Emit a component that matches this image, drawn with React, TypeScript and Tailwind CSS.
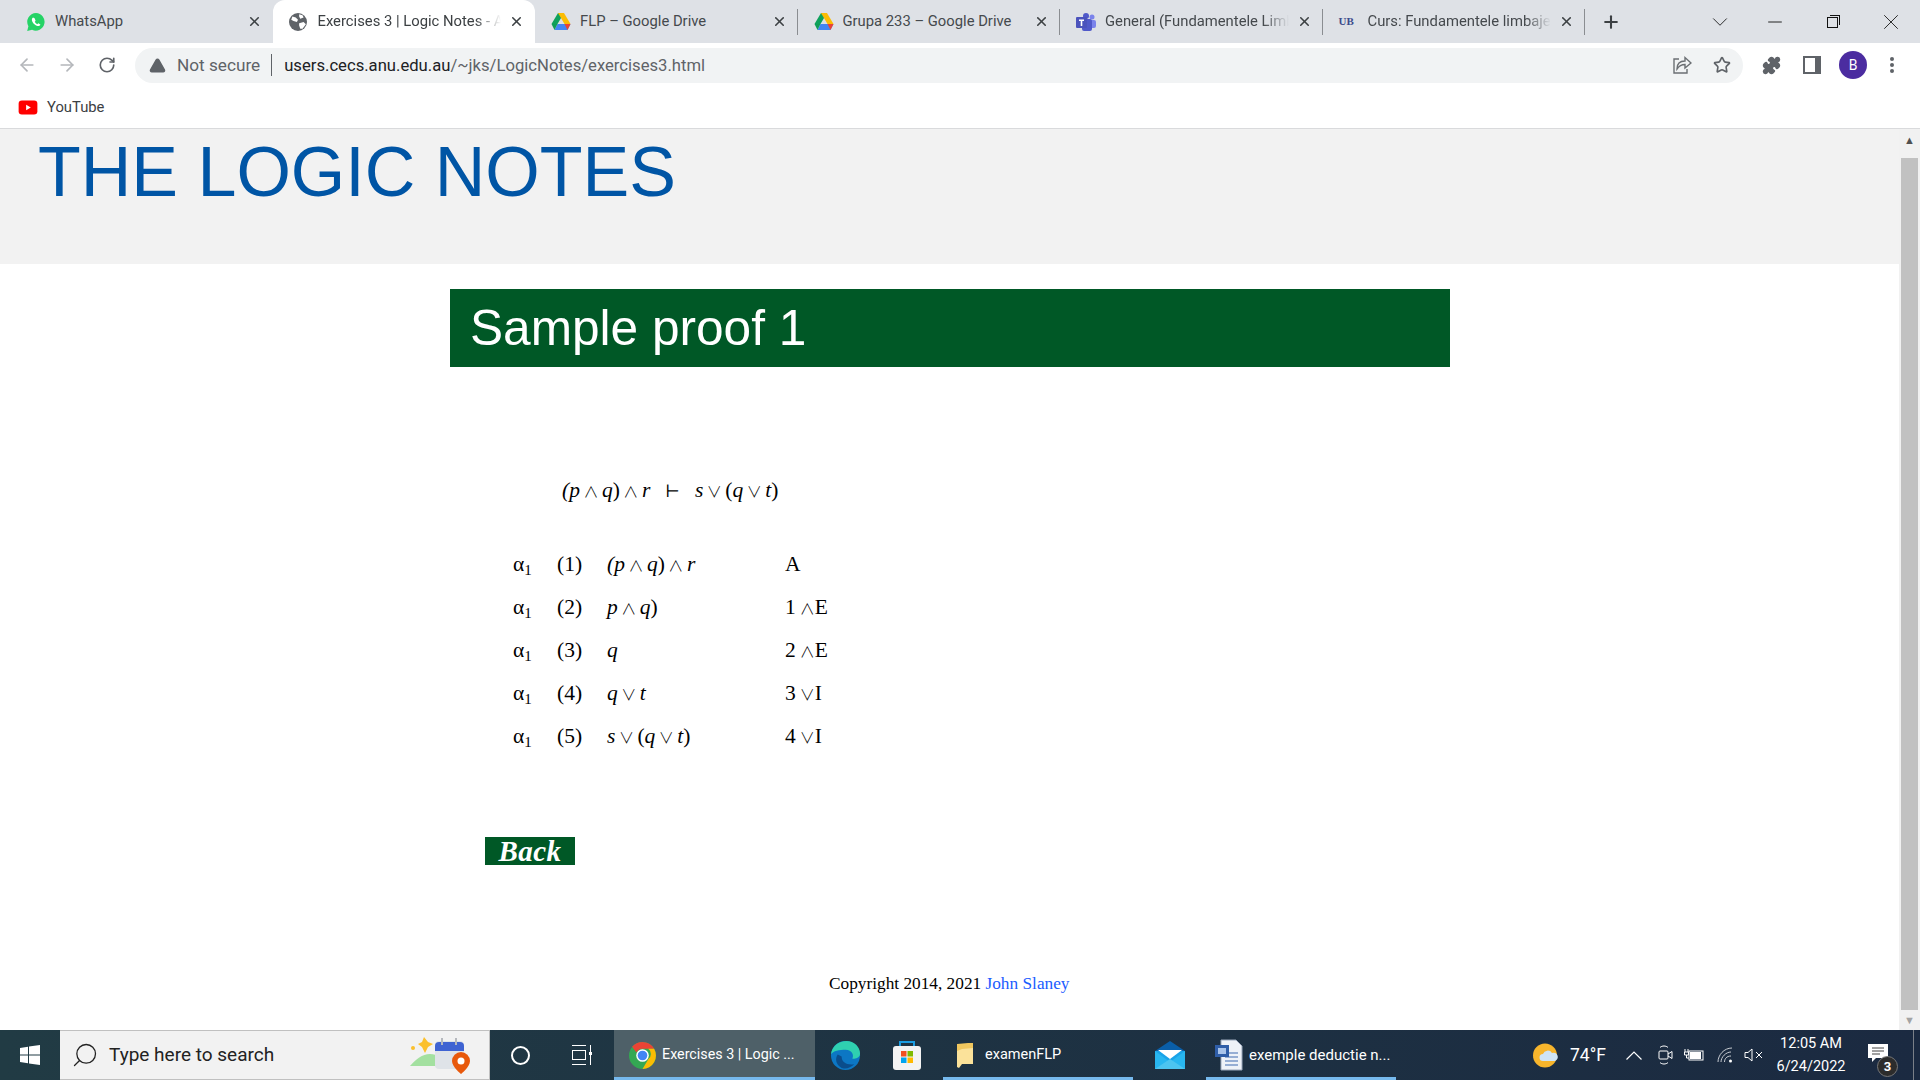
import { ArrowLeft, ArrowRight, RotateCw, Star, Puzzle, X, Plus, ChevronDown, Minus, Search, TriangleAlert } from "lucide-react";
import type { ReactNode } from "react";

function GlobeIcon() {
  return (
    <svg viewBox="0 0 16 16" className="h-[18px] w-[18px]">
      <circle cx="8" cy="8" r="8" fill="#5f6368" />
      <path d="M3 3l3 1 2 2-1 2-3-1-2-1zM9 9l4-1 2 2-3 4-2 0-1-3zM9 1l3 1 1 2-3 1-1-2z" fill="#fff" />
    </svg>
  );
}

function WhatsAppIcon() {
  return (
    <svg viewBox="0 0 20 20" className="h-[20px] w-[20px]">
      <path d="M10 1a8.800 8.800 0 0 0-7.600 13.200L1.200 19l4.900-1.200A8.800 8.800 0 1 0 10 1z" fill="#25d366" />
      <path d="M7 5.600c-1.200.8-1.500 2.400-.6 4.200 1 2 2.700 3.500 4.800 4.200 1.500.4 2.800-.3 3.200-1.500l-2.100-1.200-1 .9c-1-.4-2-1.400-2.500-2.500l.8-1-1-2.400z" fill="#fff" />
    </svg>
  );
}

function DriveIcon() {
  return (
    <svg viewBox="0 0 20 18" className="h-[18px] w-[20px]">
      <path d="M7 0h6l-6.500 11H0.500z" fill="#0ea15c" />
      <path d="M7 0h6l6.500 11h-6z" fill="#fbbc04" />
      <path d="M6.500 11H19.500l-3 6H3.500z" fill="#4285f4" />
      <path d="M0.500 11h6l-3 6z" fill="#0f9d58" />
      <path d="M13.500 11h6l-3 6z" fill="#ea4335" />
    </svg>
  );
}

function TeamsIcon() {
  return (
    <svg viewBox="0 0 20 18" className="h-[18px] w-[20px]">
      <circle cx="16" cy="4" r="2.500" fill="#7b83eb" />
      <rect x="12" y="7" width="8" height="8" rx="2" fill="#7b83eb" />
      <circle cx="10" cy="3" r="3" fill="#5059c9" />
      <rect x="6" y="6" width="10" height="12" rx="2" fill="#5059c9" />
      <rect x="0" y="4" width="11" height="11" rx="1" fill="#4b53bc" />
      <path d="M3 6.500h5v1.400H6.300V13H4.700V7.900H3z" fill="#fff" />
    </svg>
  );
}

function UbIcon() {
  return <span className="font-['Liberation_Serif',serif] text-[11px] font-bold text-[#3c4a8c]">UB</span>;
}

const tabs: { title: string; icon: ReactNode; active?: boolean; fade?: boolean }[] = [
  { title: "WhatsApp", icon: <WhatsAppIcon /> },
  { title: "Exercises 3 | Logic Notes - ANU", icon: <GlobeIcon />, active: true, fade: true },
  { title: "FLP – Google Drive", icon: <DriveIcon /> },
  { title: "Grupa 233 – Google Drive", icon: <DriveIcon /> },
  { title: "General (Fundamentele Limbajelor)", icon: <TeamsIcon />, fade: true },
  { title: "Curs: Fundamentele limbajelor", icon: <UbIcon />, fade: true },
];

function TabStrip() {
  return (
    <div className="flex h-[43px] items-stretch bg-[#dee1e6] pl-[10px] font-['Roboto',sans-serif] text-[14.800px] text-[#45494d]">
      {tabs.map((tab, i) => (
        <div
          key={tab.title}
          className={
            tab.active
              ? "flex w-[262.500px] shrink-0 items-center rounded-t-xl bg-white pl-[16px] pr-[11px] text-[#3c4043]"
              : "relative flex w-[262.500px] shrink-0 items-center pl-[16px] pr-[11px]"
          }
        >
          <span className="flex w-[29px] shrink-0 items-center">{tab.icon}</span>
          <span
            className={
              tab.fade
                ? "min-w-0 flex-1 overflow-hidden whitespace-nowrap [mask-image:linear-gradient(to_right,black_86%,transparent)]"
                : "min-w-0 flex-1 overflow-hidden whitespace-nowrap"
            }
          >
            {tab.title}
          </span>
          <X className="ml-2 h-[15px] w-[15px] shrink-0 text-[#3c4043]" strokeWidth={2.500} />
          {i > 1 && <span className="absolute right-0 top-[9px] h-[26px] w-px bg-[#8a8d91]" />}
        </div>
      ))}
      <div className="flex w-[52px] items-center justify-center">
        <Plus className="h-[20px] w-[20px] text-[#3c4043]" strokeWidth={2.500} />
      </div>
      <div className="ml-auto flex items-center text-[#111]">
        <ChevronDown className="mr-[31px] h-[26px] w-[26px]" strokeWidth={0.800} />
        <Minus className="mr-[41px] h-[22px] w-[22px]" strokeWidth={1} />
        <span className="relative mr-[40px] mt-[2px] h-[11px] w-[11px] border border-[#111]">
          <span className="absolute -right-[3px] -top-[3px] h-[10px] w-[10px] border-r border-t border-[#111]" />
        </span>
        <X className="mr-[16px] h-[26px] w-[26px]" strokeWidth={0.800} />
      </div>
    </div>
  );
}

function Toolbar() {
  return (
    <div className="flex h-[44px] items-center bg-white font-['Roboto',sans-serif]">
      <ArrowLeft className="ml-[17px] h-[20px] w-[20px] text-[#b4b7bb]" strokeWidth={2} />
      <ArrowRight className="ml-[20px] h-[20px] w-[20px] text-[#b4b7bb]" strokeWidth={2} />
      <RotateCw className="ml-[21px] h-[18px] w-[18px] text-[#5f6368]" strokeWidth={2.200} />
      <div className="ml-[19px] flex h-[35px] w-[1608px] items-center rounded-full bg-[#f1f3f4] pl-[14px] pr-[12px]">
        <TriangleAlert className="h-[17px] w-[17px] fill-[#5f6368] text-[#5f6368]" />
        <span className="ml-[11px] pt-[2px] text-[17.200px] text-[#5f6368]">Not secure</span>
        <span className="ml-[11px] mr-[12px] h-[22px] w-px bg-[#5f6368]" />
        <span className="pt-[2px] text-[16.650px] text-[#202124]">users.cecs.anu.edu.au</span>
        <span className="pt-[2px] text-[16.650px] text-[#5f6368]">/~jks/LogicNotes/exercises3.html</span>
        <svg viewBox="0 0 20 20" className="ml-auto h-[20px] w-[20px]" fill="none" stroke="#6b6f73" strokeWidth="1.400">
          <path d="M7 4H2v14h13v-4" />
          <path d="M5 14c0-5 3-8 8-8V2.500l6 5.500-6 5V9.500c-4 0-6 1.500-8 4.500z" />
        </svg>
        <Star className="ml-[21px] h-[18px] w-[18px] text-[#5f6368]" strokeWidth={2.200} />
      </div>
      <Puzzle className="ml-[19px] h-[19px] w-[19px] fill-[#5f6368] text-[#5f6368]" />
      <span className="ml-[22px] flex h-[18px] w-[18px] justify-end border-2 border-[#5f6368]">
        <span className="h-full w-[4px] bg-[#5f6368]" />
      </span>
      <span className="ml-[18px] flex h-[28px] w-[28px] items-center justify-center rounded-full bg-[#4b2ca0] text-[14px] text-white">B</span>
      <span className="ml-[23px] flex flex-col gap-[2px]">
        <span className="h-[4px] w-[4px] rounded-full bg-[#5f6368]" />
        <span className="h-[4px] w-[4px] rounded-full bg-[#5f6368]" />
        <span className="h-[4px] w-[4px] rounded-full bg-[#5f6368]" />
      </span>
    </div>
  );
}

function BookmarksBar() {
  return (
    <div className="flex h-[42px] items-center border-b border-[#d9dadc] bg-white pb-[1px] pl-[18px] font-['Roboto',sans-serif] text-[14.800px] text-[#3c4043]">
      <svg viewBox="0 0 20 16" className="h-[15px] w-[20px]">
        <rect width="20" height="15" y="0.500" rx="3.500" fill="#f00" />
        <path d="M8 5l5 3-5 3z" fill="#fff" />
      </svg>
      <span className="ml-[9px]">YouTube</span>
    </div>
  );
}

const M = ({ children }: { children: ReactNode }) => <i>{children}</i>;
const Op = ({ children }: { children: ReactNode }) => (
  <span className="mx-[3.500px] font-['Noto_Sans_CJK_SC',sans-serif] text-[15px] font-light">{children}</span>
);
const RuleOp = ({ children }: { children: ReactNode }) => (
  <span className="ml-[4px] font-['Noto_Sans_CJK_SC',sans-serif] text-[15px] font-light">{children}</span>
);

const rows: { n: string; formula: ReactNode; rule: ReactNode }[] = [
  { n: "(1)", formula: <><M>(p</M><Op>∧</Op><M>q</M>)<Op>∧</Op><M>r</M></>, rule: "A" },
  { n: "(2)", formula: <><M>p</M><Op>∧</Op><M>q</M>)</>, rule: <>1<RuleOp>∧</RuleOp>E</> },
  { n: "(3)", formula: <M>q</M>, rule: <>2<RuleOp>∧</RuleOp>E</> },
  { n: "(4)", formula: <><M>q</M><Op>∨</Op><M>t</M></>, rule: <>3<RuleOp>∨</RuleOp>I</> },
  { n: "(5)", formula: <><M>s</M><Op>∨</Op>(<M>q</M><Op>∨</Op><M>t</M>)</>, rule: <>4<RuleOp>∨</RuleOp>I</> },
];

function Page() {
  return (
    <div className="min-w-0 flex-1 bg-white font-['Liberation_Serif','DejaVu_Serif',serif] text-black">
      <header className="h-[135px] bg-[#f2f2f2] pl-[38px] font-['Liberation_Sans',sans-serif] text-[70px] leading-[86px] text-[#0055a5]">
        THE LOGIC NOTES
      </header>
      <div className="ml-[450px] w-[1000px] pt-[25px]">
        <h2 className="flex h-[78px] items-center bg-[#005826] pl-[20px] pt-[1px] font-['Liberation_Sans',sans-serif] text-[49.600px] text-white">
          Sample proof 1
        </h2>
        <p className="ml-[112px] mt-[109px] text-[21.500px] leading-[28px]">
          <M>(p</M><Op>∧</Op><M>q</M>)<Op>∧</Op><M>r</M>
          <span className="mx-[15px] text-[17px]">⊢</span>
          <M>s</M><Op>∨</Op>(<M>q</M><Op>∨</Op><M>t</M>)
        </p>
        <div className="ml-[63px] mt-[37px] text-[21.500px] leading-[43px]">
          {rows.map((row) => (
            <div key={row.n} className="grid h-[43px] grid-cols-[44px_50px_178px_1fr]">
              <span>
                α<sub className="text-[15px]">1</sub>
              </span>
              <span>{row.n}</span>
              <span>{row.formula}</span>
              <span>{row.rule}</span>
            </div>
          ))}
        </div>
        <a className="ml-[35px] mt-[79px] flex h-[28px] w-[90px] items-center justify-center bg-[#005826] text-[29px] font-bold italic leading-none tracking-[0.500px] text-white">
          Back
        </a>
        <p className="mt-[108px] pl-[379px] text-[17.300px] leading-[22px]">
          Copyright 2014, 2021 <span className="text-[#1a5cff]">John Slaney</span>
        </p>
      </div>
    </div>
  );
}

function Scrollbar() {
  return (
    <div className="flex w-[21px] shrink-0 flex-col bg-[#f1f1f1]">
      <div className="flex h-[29px] items-center justify-center pb-[7px] text-[11px] text-[#505050]">▲</div>
      <div className="mx-[2px] flex-1 bg-[#c1c1c1]" />
      <div className="flex h-[20px] items-center justify-center text-[11px] text-[#a3a3a3]">▼</div>
    </div>
  );
}

function EdgeIcon() {
  return (
    <svg viewBox="0 0 32 32" className="h-[31px] w-[31px]">
      <circle cx="16" cy="16" r="15" fill="#0c77c4" />
      <path d="M1 15C2 6 9 1 17 1c8 0 14 6 14 13 0 4-4 6-8 5 2-3 0-9-7-9-6 0-13 1-15 5z" fill="#2fd0b0" />
      <path d="M12 17c0 6 5 9 13 8-4 4-10 6-14 3-5-3-6-9-3-13z" fill="#0a4d8c" />
    </svg>
  );
}

function StoreIcon() {
  return (
    <svg viewBox="0 0 30 30" className="h-[30px] w-[30px]">
      <path d="M8 7V2h14v5" fill="none" stroke="#1b9de2" strokeWidth="2" />
      <rect x="1" y="6" width="28" height="24" rx="3" fill="#f3f3f3" />
      <rect x="9" y="11" width="5.500" height="5.500" fill="#f25022" />
      <rect x="15.500" y="11" width="5.500" height="5.500" fill="#7fba00" />
      <rect x="9" y="17.500" width="5.500" height="5.500" fill="#00a4ef" />
      <rect x="15.500" y="17.500" width="5.500" height="5.500" fill="#ffb900" />
    </svg>
  );
}

function FolderIcon() {
  return (
    <svg viewBox="0 0 18 26" className="h-[26px] w-[18px]">
      <path d="M1 2l11-1h5v21H3L1 22z" fill="#f0c75e" />
      <path d="M6 7l11-1v16H6l-3 4-2-1V9z" fill="#fbe29a" />
    </svg>
  );
}

function MailIcon() {
  return (
    <svg viewBox="0 0 30 28" className="h-[28px] w-[30px]">
      <path d="M15 0l15 10v18H0V10z" fill="#0a5ea8" />
      <path d="M0 10h30v18H0z" fill="#1aa3e8" />
      <path d="M3 9h24l-12 9z" fill="#fff" />
      <path d="M0 10l15 11L30 10v18H0z" fill="#28b6f0" />
      <path d="M0 28l15-10 15 10z" fill="#4cc4f0" />
    </svg>
  );
}

function WordDocIcon() {
  return (
    <svg viewBox="0 0 28 32" className="h-[32px] w-[28px]">
      <path d="M6 1h15l6 6v24H6z" fill="#eef2f8" stroke="#9aa7bb" />
      <path d="M10 14h13M10 18h13M10 22h13M10 26h13" stroke="#7a98c8" strokeWidth="1.500" />
      <rect x="0" y="6" width="14" height="12" fill="#2f5ea8" />
      <rect x="3" y="9" width="8" height="6" fill="#a9c4ea" />
    </svg>
  );
}

function ChromeIcon() {
  return (
    <svg viewBox="0 0 28 28" className="h-[27px] w-[27px]">
      <circle cx="14" cy="14" r="14" fill="#34a853" />
      <path d="M14 0a14 14 0 0 1 12.100 7H14a7 7 0 0 0-6.300 4L3.200 5A14 14 0 0 1 14 0z" fill="#ea4335" />
      <path d="M26.100 7A14 14 0 0 1 14 28l6-10a7 7 0 0 0 0-11z" fill="#fbbc04" />
      <circle cx="14" cy="14" r="6.500" fill="#fff" />
      <circle cx="14" cy="14" r="5" fill="#4285f4" />
    </svg>
  );
}

function NewsIcon() {
  return (
    <svg viewBox="0 0 60 37" className="h-[37px] w-[60px]">
      <path d="M0 29c6-7 12-12 20-12s10 4 12 12z" fill="#a3e0a0" />
      <path d="M14 0l4 5 5 2-5 3-3 6-3-6-4-3 4-2z" fill="#fbc02d" />
      <circle cx="3" cy="11" r="2" fill="#fbc02d" />
      <rect x="25" y="4" width="29" height="28" rx="4" fill="#dfe3e8" />
      <path d="M25 9a4 4 0 0 1 4-4h21a4 4 0 0 1 4 4v5H25z" fill="#3f63d2" />
      <path d="M32 1v7M46 1v7" stroke="#b5b8bd" strokeWidth="2" />
      <path d="M51 15a9 9 0 0 1 9 9c0 6-9 13-9 13s-9-7-9-13a9 9 0 0 1 9-9z" fill="#e8590c" />
      <circle cx="51" cy="24" r="3.500" fill="#fff" />
    </svg>
  );
}

function WeatherIcon() {
  return (
    <svg viewBox="0 0 25 25" className="h-[25px] w-[25px]">
      <circle cx="12" cy="12.500" r="12" fill="#f7b52c" />
      <path d="M10 18a3.500 3.500 0 0 1 0-7 5 5 0 0 1 9-1 4 4 0 0 1 3 8z" fill="#cfe4f5" />
    </svg>
  );
}

function TrayChevron() {
  return (
    <svg viewBox="0 0 16 9" className="ml-[19px] h-[9px] w-[16px]" fill="none" stroke="#fff" strokeWidth="1.200">
      <path d="M0.500 8.500L8 1l7.500 7.500" />
    </svg>
  );
}

function MeetIcon() {
  return (
    <svg viewBox="0 0 15 20" className="ml-[16px] h-[20px] w-[15px]" fill="none" stroke="#fff" strokeWidth="1">
      <path d="M2 2.500c2-2 6-2 8 0M2 17.500c2 2 6 2 8 0" />
      <rect x="1" y="6" width="9" height="8" rx="1" />
      <path d="M10 9l4-2.500v7L10 11" />
    </svg>
  );
}

function BatteryIcon() {
  return (
    <svg viewBox="0 0 20 14" className="ml-[11px] h-[14px] w-[20px]" fill="none" stroke="#fff" strokeWidth="1">
      <path d="M1 1v3M4 1v3M0.500 4h4v3h-4zM2.500 7v3H5" />
      <rect x="5" y="3" width="14" height="9" />
      <rect x="6" y="4" width="11" height="7" fill="#fff" stroke="none" />
    </svg>
  );
}

function WifiIcon() {
  return (
    <svg viewBox="0 0 16 16" className="ml-[13px] h-[16px] w-[16px]" fill="none" stroke="#c8ccd2" strokeWidth="1">
      <path d="M1 15C1 8 7 1 15 1M4 15c0-5 5-10 10-10M7.500 15c0-3 2-6 6.500-6" />
      <circle cx="13.500" cy="14" r="1.500" fill="#fff" stroke="none" />
    </svg>
  );
}

function SpeakerIcon() {
  return (
    <svg viewBox="0 0 19 14" className="ml-[11px] h-[14px] w-[19px]" fill="none" stroke="#fff" strokeWidth="1">
      <path d="M1 4.500h3L8 1v12L4 9.500H1z" />
      <path d="M12 4l6 6M18 4l-6 6" />
    </svg>
  );
}

function NotificationIcon() {
  return (
    <div className="relative ml-[12px] flex w-[32px] items-center">
      <svg viewBox="0 0 20 18" className="mb-[4px] h-[18px] w-[20px]">
        <path d="M0 0h20v14H8l-4 4v-4H0z" fill="#fff" />
        <path d="M4 4h12M4 7h12M4 10h8" stroke="#444" strokeWidth="1" />
      </svg>
      <span className="absolute bottom-[3px] left-[9px] flex h-[21px] w-[21px] items-center justify-center rounded-full border border-[#777] bg-[#2c2c2c] text-[13px] font-bold">3</span>
    </div>
  );
}

function Taskbar() {
  return (
    <div className="flex h-[50px] shrink-0 items-stretch bg-gradient-to-r from-[#213b44] to-[#1b2a41] font-['Roboto',sans-serif] text-[14.500px] text-white">
      <div className="flex w-[60px] shrink-0 items-center justify-center">
        <svg viewBox="0 0 20 20" className="h-[20px] w-[20px]" fill="#fff">
          <path d="M0 3l8-1.200V9.500H0zM9 1.600L20 0v9.500H9zM0 10.500h8v7.700L0 17zM9 10.500h11V20L9 18.400z" />
        </svg>
      </div>
      <div className="flex w-[430px] shrink-0 items-center border-y border-r border-[#c0c0c0] bg-[#f2f2f2] pl-[11px] pr-[19px] text-[19px] text-[#222]">
        <Search className="h-[28px] w-[28px] -scale-x-100" strokeWidth={1.100} />
        <span className="ml-[10px]">Type here to search</span>
        <span className="ml-auto">
          <NewsIcon />
        </span>
      </div>
      <div className="flex w-[60px] shrink-0 items-center justify-center">
        <span className="h-[19px] w-[19px] rounded-full border-[2.500px] border-white" />
      </div>
      <div className="flex w-[64px] shrink-0 items-center justify-center">
        <span className="relative flex h-[20px] w-[20px] flex-col justify-between">
          <span className="h-px w-[14px] bg-white" />
          <span className="h-[10px] w-[14px] border border-white" />
          <span className="h-px w-[14px] bg-white" />
          <span className="absolute right-[1px] top-0 h-full w-px bg-white" />
          <span className="absolute right-0 top-[7px] h-[3px] w-[3px] bg-white" />
        </span>
      </div>
      <div className="flex w-[201px] shrink-0 items-center gap-[6px] border-y-[3px] border-t-transparent border-b-[#76b9ed] bg-[#4e6068] pl-[15px] text-[14.300px]">
        <ChromeIcon />
        <span>Exercises 3 | Logic ...</span>
      </div>
      <div className="flex w-[60px] shrink-0 items-center justify-center">
        <EdgeIcon />
      </div>
      <div className="flex w-[63px] shrink-0 items-center justify-center">
        <StoreIcon />
      </div>
      <div className="ml-[5px] flex w-[190px] shrink-0 items-center gap-[11px] border-y-[3px] border-t-transparent border-b-[#76b9ed] pl-[13px]">
        <FolderIcon />
        <span>examenFLP</span>
      </div>
      <div className="flex w-[73px] shrink-0 items-center justify-center">
        <MailIcon />
      </div>
      <div className="flex w-[190px] shrink-0 items-center gap-[6px] border-y-[3px] border-t-transparent border-b-[#76b9ed] pl-[9px] text-[15px]">
        <WordDocIcon />
        <span>exemple deductie n...</span>
      </div>
      <div className="ml-[137px] flex items-center">
        <WeatherIcon />
        <span className="ml-[12px] w-[37px] text-[17.500px]">74°F</span>
        <TrayChevron />
        <MeetIcon />
        <BatteryIcon />
        <WifiIcon />
        <SpeakerIcon />
      </div>
      <div className="ml-[3px] flex w-[90px] flex-col items-center justify-center">
        <span className="leading-[23px]">12:05 AM</span>
        <span className="leading-[23px]">6/24/2022</span>
      </div>
      <NotificationIcon />
      <span className="ml-[13px] w-px bg-[#7a8088]" />
    </div>
  );
}

export default function App() {
  return (
    <div className="flex h-screen flex-col overflow-hidden">
      <TabStrip />
      <Toolbar />
      <BookmarksBar />
      <main className="flex min-h-0 flex-1">
        <Page />
        <Scrollbar />
      </main>
      <Taskbar />
    </div>
  );
}
